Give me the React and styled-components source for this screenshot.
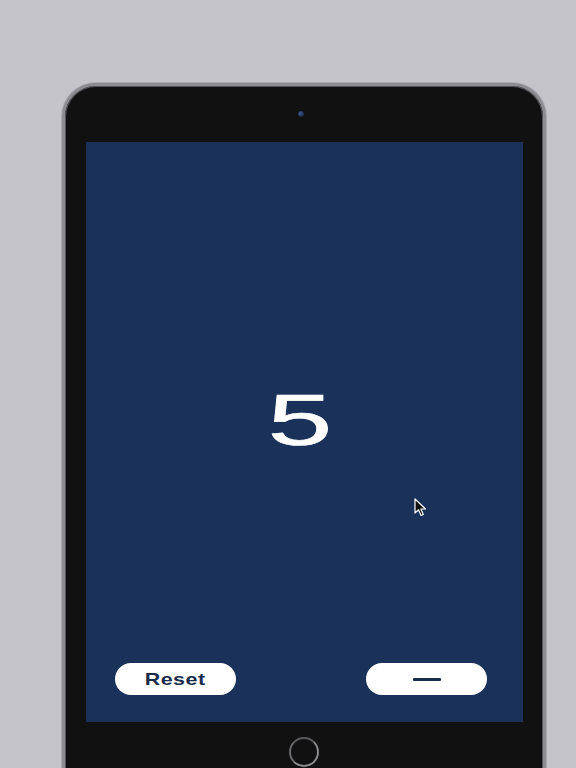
import React, { useState } from 'react';
import styled, { createGlobalStyle } from 'styled-components';

const GlobalStyle = createGlobalStyle`
  html, body {
    margin: 0;
    padding: 0;
    height: 768px;
    overflow: hidden;
    background: #c5c4c9;
    font-family: "Liberation Sans", Arial, sans-serif;
  }
`;

const Page = styled.div`
  width: 576px;
  height: 768px;
  padding-top: 83px;
  padding-left: 62px;
  box-sizing: border-box;
`;

const Device = styled.div`
  width: 484px;
  height: 720px;
  box-sizing: border-box;
  border: 3px solid #8d8c91;
  border-radius: 34px;
  background: #111111;
  box-shadow: inset 0 0 0 1px #55555a, 0 0 0 1px #a9a8ad;
  display: flex;
  flex-direction: column;
  align-items: center;
`;

const TopBezel = styled.div`
  height: 56px;
  width: 100%;
  display: flex;
  align-items: center;
  justify-content: center;
  padding-right: 6px;
  box-sizing: border-box;
`;

const Camera = styled.div`
  width: 6px;
  height: 6px;
  border-radius: 50%;
  background: radial-gradient(circle at 40% 40%, #3b5a9a, #1c2740 70%, #2a2a2a);
`;

const Screen = styled.div`
  width: 437px;
  height: 580px;
  margin-left: 1px;
  background: #1a325a;
  display: flex;
  flex-direction: column;
  position: relative;
`;

const Display = styled.div`
  flex: 1;
  display: flex;
  align-items: center;
  justify-content: center;
  padding-top: 35px;
  padding-right: 8px;
`;

const Count = styled.span`
  color: #ffffff;
  font-size: 72px;
  line-height: 1;
  -webkit-text-stroke: 0.6px #ffffff;
  transform: scaleX(1.62);
`;

const ButtonRow = styled.div`
  display: flex;
  justify-content: space-between;
  padding: 0 36px 27px 29px;
`;

const PillButton = styled.button`
  width: 121px;
  height: 32px;
  border: none;
  border-radius: 16px;
  background: #ffffff;
  color: #1a2b4c;
  display: flex;
  align-items: center;
  justify-content: center;
  cursor: pointer;
  padding: 0;
`;

const Label = styled.span`
  font-family: "Liberation Sans", Arial, sans-serif;
  font-weight: 700;
  font-size: 17px;
  letter-spacing: 0.4px;
  margin-top: 2px;
  transform: scaleX(1.26);
`;

const Minus = styled.span`
  width: 28px;
  height: 3px;
  background: #1a2b4c;
  border-radius: 1px;
`;

const Pointer = styled.svg`
  position: absolute;
  left: 328px;
  top: 356px;
`;

const BottomBezel = styled.div`
  flex: 1;
  width: 100%;
  display: flex;
  justify-content: center;
  padding-top: 15px;
  box-sizing: border-box;
`;

const HomeButton = styled.div`
  width: 26px;
  height: 26px;
  border-radius: 50%;
  border: 2px solid #8a8a8f;
  border-top-color: #5a5a5e;
  border-left-color: #6a6a6e;
`;

export default function App() {
  const [count, setCount] = useState(5);

  return (
    <>
      <GlobalStyle />
      <Page>
        <Device>
          <TopBezel>
            <Camera />
          </TopBezel>
          <Screen>
            <Display>
              <Count>{count}</Count>
            </Display>
            <ButtonRow>
              <PillButton onClick={() => setCount(0)}>
                <Label>Reset</Label>
              </PillButton>
              <PillButton onClick={() => setCount((c) => c - 1)}>
                <Minus />
              </PillButton>
            </ButtonRow>
            <Pointer width="16" height="20" viewBox="0 0 16 20">
              <path d="M1 1 L1 15 L4.5 11.8 L7 17.5 L9.3 16.5 L6.9 11 L11.5 11 Z" fill="#111" stroke="#fff" strokeWidth="1.2" strokeLinejoin="round" />
            </Pointer>
          </Screen>
          <BottomBezel>
            <HomeButton />
          </BottomBezel>
        </Device>
      </Page>
    </>
  );
}
